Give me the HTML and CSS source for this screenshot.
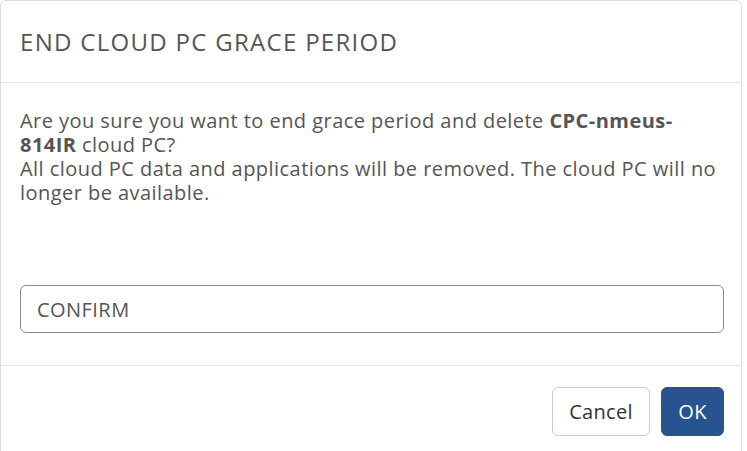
FILE: index.html
```html
<!DOCTYPE html>
<html lang="en">
<head>
<meta charset="utf-8">
<title>End Cloud PC Grace Period</title>
<link rel="stylesheet" href="styles.css">
</head>
<body>
<div class="dialog">
  <div class="dialog-header">
    <h1 class="dialog-title">END CLOUD PC GRACE PERIOD</h1>
  </div>
  <div class="dialog-body">
    <p class="message">Are you sure you want to end grace period and delete <strong>CPC-nmeus-814IR</strong> cloud PC?<br>All cloud PC data and applications will be removed. The cloud PC will no longer be available.</p>
    <input class="confirm-input" type="text" value="CONFIRM">
  </div>
  <div class="dialog-footer">
    <button class="btn btn-default" type="button">Cancel</button>
    <button class="btn btn-primary" type="button">OK</button>
  </div>
</div>
</body>
</html>
```
FILE: styles.css
```css
html, body {
  margin: 0;
  padding: 0;
  background: #ffffff;
}
body {
  font-family: "Open Sans", "Noto Sans", sans-serif;
  color: #555555;
  width: 747px;
  height: 451px;
  overflow: hidden;
}
.dialog {
  width: 742px;
  height: 470px;
  border: 1px solid #dcdcdc;
  border-radius: 6px;
  box-sizing: border-box;
  background: #ffffff;
  display: flex;
  flex-direction: column;
}
.dialog-header {
  height: 81px;
  border-bottom: 1px solid #e5e5e5;
  display: flex;
  align-items: center;
  padding: 0 19px;
  flex-shrink: 0;
}
.dialog-title {
  margin: 0;
  font-size: 24px;
  font-weight: 400;
  color: #555555;
  letter-spacing: 1.3px;
}
.dialog-body {
  padding: 26px 17px 32px 19px;
  display: flex;
  flex-direction: column;
}
.message {
  margin: 0;
  font-size: 20px;
  line-height: 24px;
  letter-spacing: 0.45px;
  color: #555555;
}
.message strong {
  font-weight: 700;
  color: #555555;
}
.confirm-input {
  margin-top: 80px;
  height: 48px;
  box-sizing: border-box;
  border: 1px solid #8a8a8a;
  border-radius: 6px;
  padding: 0 16px;
  font-family: "Open Sans", "Noto Sans", sans-serif;
  font-size: 20px;
  letter-spacing: 0.45px;
  color: #555555;
  outline: none;
  width: 704px;
}
.dialog-footer {
  border-top: 1px solid #e5e5e5;
  display: flex;
  justify-content: flex-end;
  gap: 11px;
  padding: 21px 17px 0 0;
}
.btn {
  font-family: "Open Sans", "Noto Sans", sans-serif;
  font-size: 20px;
  letter-spacing: 0.3px;
  height: 49px;
  border-radius: 6px;
  padding: 0 12px;
  cursor: pointer;
}
.btn-default {
  background: #ffffff;
  color: #333333;
  border: 1px solid #cccccc;
  width: 98px;
}
.btn-primary {
  background: #27548f;
  color: #ffffff;
  border: 1px solid #27548f;
  width: 63px;
}
```
